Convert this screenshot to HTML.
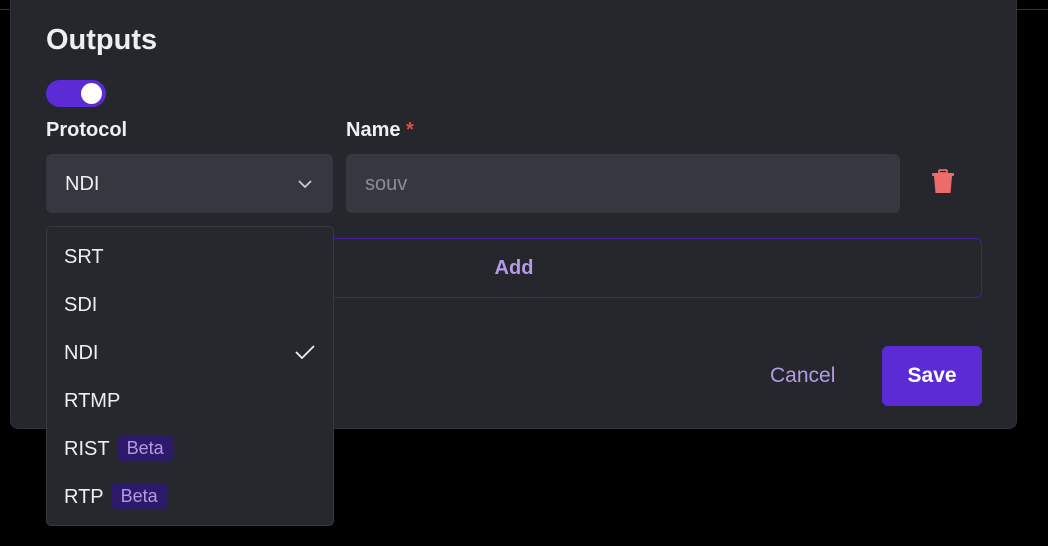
<!DOCTYPE html>
<html><head><style>
*{margin:0;padding:0;box-sizing:border-box}
body{width:1048px;height:546px;background:#000;position:relative;overflow:hidden;font-family:"Liberation Sans",sans-serif;color:#eeeff1}
.modal{position:absolute;left:10px;top:-20px;width:1007px;height:449px;background:#25272c;border-radius:8px;border:1px solid #303238}
.a{position:absolute}
.title{left:46px;top:24px;font-size:29px;font-weight:bold}
.tog{left:46px;top:80px;width:60px;height:27px;border-radius:14px;background:#5b2bd6}
.tog::after{content:"";position:absolute;right:4px;top:3px;width:21px;height:21px;border-radius:50%;background:#fff}
.lbl{font-size:20px;font-weight:bold;top:119px}
.field{top:154px;height:59px;background:#35383e;border-radius:6px;font-size:20px;line-height:61px;padding-left:19px}
.add{left:46px;top:238px;width:936px;height:60px;border:1px solid #43209e;border-radius:6px;text-align:center;line-height:58px;color:#b49be8;font-size:20px;font-weight:bold}
.dd{left:46px;top:226px;width:288px;height:300px;background:#26282d;border:1px solid #383a40;border-radius:5px}
.it{position:absolute;left:17px;font-size:20px;height:28px;line-height:30px}
.beta{display:inline-block;background:#2e1a6b;color:#b39ae6;border-radius:4px;font-size:18px;padding:0 9px;height:26px;line-height:26px;margin-left:8px;vertical-align:middle;position:relative;top:-2px}
</style></head><body>
<div class="a" style="left:0;top:9px;width:10px;height:1px;background:#333"></div>
<div class="a" style="left:1017px;top:9px;width:31px;height:1px;background:#333"></div>
<div class="modal"></div>
<div class="a title">Outputs</div>
<div class="a tog"></div>
<div class="a lbl" style="left:46px">Protocol</div>
<div class="a lbl" style="left:346px">Name <span style="color:#e5484d">*</span></div>
<div class="a field" style="left:46px;width:287px">NDI
<svg style="position:absolute;right:20px;top:25px" width="16" height="10" viewBox="0 0 16 10"><path d="M2 2 L8 8 L14 2" fill="none" stroke="#c9cbd0" stroke-width="1.8"/></svg></div>
<div class="a field" style="left:346px;width:554px;color:#8b8e95">souv</div>
<svg class="a" style="left:931px;top:169px" width="24" height="25" viewBox="0 0 24 25"><rect x="8" y="1" width="8" height="3" rx="1" fill="none" stroke="#ec6b6b" stroke-width="1.8"/><rect x="1" y="4" width="22" height="3" rx="1" fill="#ec6b6b"/><path d="M3 7 H21 L19.5 24 H4.5 Z" fill="#ec6b6b"/></svg>
<div class="a add">Add</div>
<div class="a" style="left:770px;top:364px;font-size:21px;color:#b39ae6">Cancel</div>
<div class="a" style="left:882px;top:346px;width:100px;height:60px;background:#5b2bd6;border-radius:6px;text-align:center;line-height:60px;font-size:21px;font-weight:bold;color:#fff">Save</div>
<div class="a dd">
<div class="it" style="top:15px">SRT</div>
<div class="it" style="top:63px">SDI</div>
<div class="it" style="top:111px">NDI</div>
<svg style="position:absolute;left:248px;top:118px" width="20" height="14" viewBox="0 0 20 14"><path d="M1 7 L7 13 L19 1" fill="none" stroke="#eeeff1" stroke-width="1.8"/></svg>
<div class="it" style="top:159px">RTMP</div>
<div class="it" style="top:207px">RIST<span class="beta">Beta</span></div>
<div class="it" style="top:255px">RTP<span class="beta">Beta</span></div>
</div>
</body></html>
